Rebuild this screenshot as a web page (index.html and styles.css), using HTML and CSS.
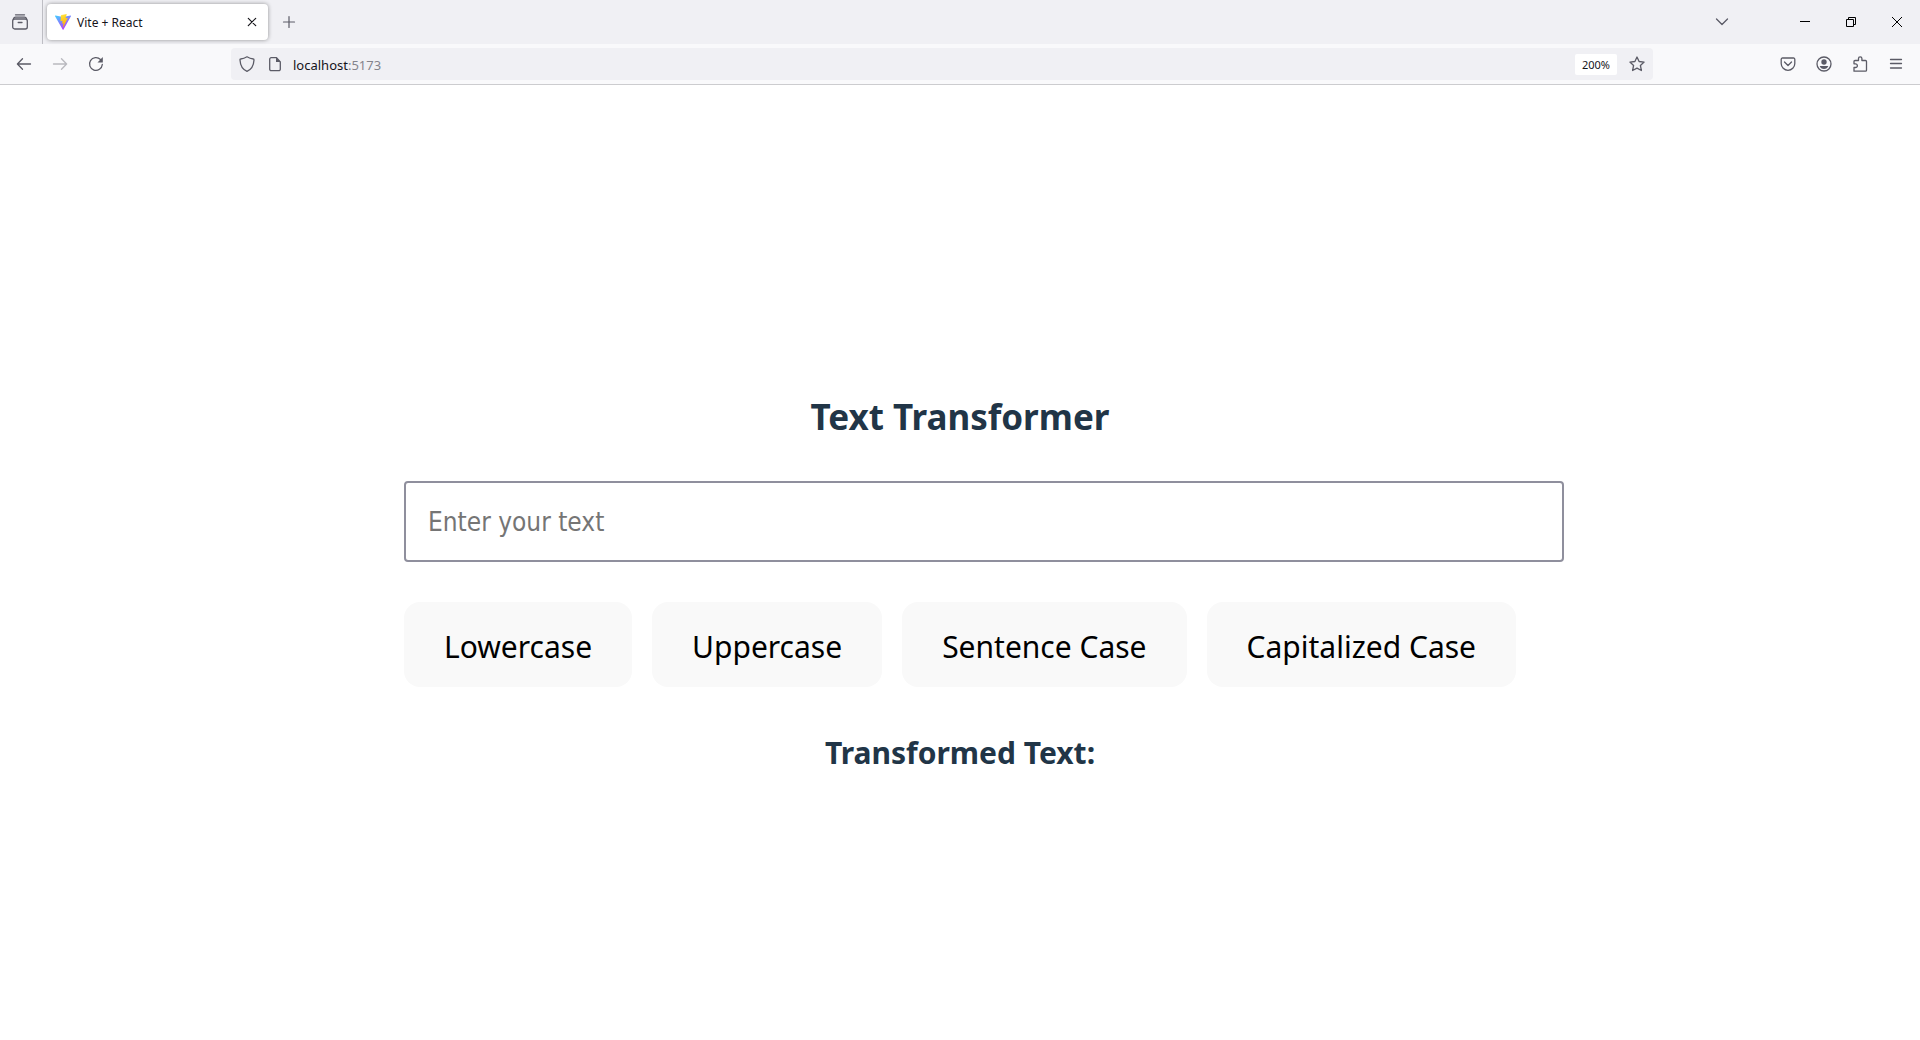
FILE: index.html
```html
<!DOCTYPE html>
<html lang="en">
<head>
  <meta charset="utf-8">
  <meta name="viewport" content="width=device-width, initial-scale=1">
  <title>Vite + React</title>
  <link rel="stylesheet" href="styles.css">
</head>
<body>
  <header class="chrome">
    <div class="tabbar">
      <div class="view">
        <button class="icon-btn" type="button" aria-label="View recent browsing">
          <svg width="16" height="16" viewBox="0 0 16 16"><path d="M3.5 .8h9" /><rect x=".7" y="5" width="14.6" height="10" rx="2"/><path d="M1.5 4.6q.6-1.4 2-1.4h9q1.400 0 2 1.400"/><path d="M6.200 8.500h3.800"/></svg>
        </button>
      </div>
      <div class="tab">
        <svg width="16" height="16" viewBox="0 0 32 32" class="logo">
          <defs>
            <linearGradient id="shield" x1="0" y1="0" x2=".6" y2="1"><stop offset="0" stop-color="#41d1ff"/><stop offset="1" stop-color="#bd34fe"/></linearGradient>
            <linearGradient id="bolt" x1=".4" y1="0" x2=".6" y2="1"><stop offset="0" stop-color="#ffea83"/><stop offset=".1" stop-color="#ffdd35"/><stop offset="1" stop-color="#ffa800"/></linearGradient>
          </defs>
          <path fill="url(#shield)" d="M31.900 4.700 17 31.200a1 1 0 0 1-1.700 0L.1 4.700a1 1 0 0 1 1-1.500L16 5.900 30.900 3.200a1 1 0 0 1 1 1.500z"/>
          <path fill="url(#bolt)" d="M23.200 0 12.200 2.200a.5.5 0 0 0-.4.4l-.7 11.400a.4.4 0 0 0 .5.4l3-.7a.4.4 0 0 1 .5.5l-.9 4.500a.4.4 0 0 0 .5.500l1.900-.6a.4.4 0 0 1 .5.500l-1.400 7c-.1.400.5.700.7.300l9-18a.4.4 0 0 0-.5-.6l-3.200.6a.4.4 0 0 1-.4-.5l2.100-7.300a.4.4 0 0 0-.2-.6z"/>
        </svg>
        <span class="tab-title">Vite + React</span>
        <button class="icon-btn dark" type="button" aria-label="Close tab">
          <svg width="16" height="16" viewBox="0 0 16 16"><path d="m4.300 4.300 7.400 7.400M11.700 4.300l-7.400 7.400"/></svg>
        </button>
      </div>
      <button class="icon-btn new-tab" type="button" aria-label="New tab">
        <svg width="16" height="16" viewBox="0 0 16 16"><path d="M8 2.500v11M2.500 8h11"/></svg>
      </button>
      <button class="icon-btn list-tabs" type="button" aria-label="List all tabs">
        <svg width="16" height="16" viewBox="0 0 16 16"><path d="m2.500 5 5.500 5.500L13.500 5"/></svg>
      </button>
      <div class="window-controls">
        <button class="icon-btn black" type="button" aria-label="Minimize"><svg width="12" height="12" viewBox="0 0 12 12"><path d="M1 5.500h10"/></svg></button>
        <button class="icon-btn black" type="button" aria-label="Restore"><svg width="12" height="12" viewBox="0 0 12 12"><path d="M1.500 3.500h7v7h-7zM3.500 3.500v-2h7v7h-2"/></svg></button>
        <button class="icon-btn black" type="button" aria-label="Close"><svg width="12" height="12" viewBox="0 0 12 12"><path d="m1 1 10 10M11 1 1 11"/></svg></button>
      </div>
    </div>
    <div class="toolbar">
      <nav class="nav">
        <button class="icon-btn" type="button" aria-label="Back"><svg width="16" height="16" viewBox="0 0 16 16"><path d="M14.500 8H1.500M6.500 2.700 1.400 8l5.100 5.300"/></svg></button>
        <button class="icon-btn faded" type="button" aria-label="Forward" disabled><svg width="16" height="16" viewBox="0 0 16 16"><path d="M1.500 8h13M9.500 2.700 14.600 8l-5.100 5.300"/></svg></button>
        <button class="icon-btn" type="button" aria-label="Reload"><svg width="16" height="16" viewBox="0 0 16 16"><path d="M14.300 8.500A6.400 6.400 0 1 1 12.500 3.500l1 1"/><path class="solid" d="M14.800 1v5.400H9.500z"/></svg></button>
      </nav>
      <div class="urlbar">
        <div class="location">
          <div class="identity">
            <svg width="16" height="16" viewBox="0 0 16 16"><path d="M8 .8C6 2 4 2.700 1.600 3 1 3 1 3.400 1 4c.3 5 2 9.300 7 11.300 5-2 6.700-6.300 7-11.300 0-.6 0-1-.6-1C12 2.700 10 2 8 .8z"/></svg>
            <svg width="16" height="16" viewBox="0 0 16 16"><path d="M9.500 1.700H4.200a1.500 1.500 0 0 0-1.500 1.500v10a1.500 1.500 0 0 0 1.500 1.500h7.600a1.500 1.500 0 0 0 1.500-1.500V6z"/><path class="solid" d="M9 1.500V6h4.500z"/></svg>
          </div>
          <p class="address">localhost<span class="port">:5173</span></p>
        </div>
        <button class="zoom" type="button">200%</button>
        <button class="icon-btn" type="button" aria-label="Bookmark this page"><svg width="16" height="16" viewBox="0 0 16 16"><path d="m8 1 2.100 4.500 5 .6-3.700 3.400 1 5L8 12.200l-4.400 2.300 1-5L.9 6.100l5-.6z"/></svg></button>
      </div>
      <div class="tools">
        <button class="icon-btn" type="button" aria-label="Save to Pocket"><svg width="16" height="16" viewBox="0 0 16 16"><path d="M2.500 2h11a1.300 1.300 0 0 1 1.300 1.300V7.500a6.800 6.800 0 0 1-13.600 0V3.300A1.300 1.300 0 0 1 2.500 2zM4.500 6 8 9.500 11.500 6"/></svg></button>
        <button class="icon-btn" type="button" aria-label="Account"><svg width="16" height="16" viewBox="0 0 16 16"><circle cx="8" cy="8" r="7"/><circle class="solid" cx="8" cy="6" r="2.700"/><path class="solid" d="M3.700 10h8.600q-1 3-4.300 3T3.700 10z"/></svg></button>
        <button class="icon-btn" type="button" aria-label="Extensions"><svg width="16" height="16" viewBox="0 0 16 16"><path d="M2 15.200V11.500h1.500a1.800 1.800 0 0 0 0-3.700H2V5.500a1 1 0 0 1 1-1H6.500V2.600a1.700 1.700 0 0 1 3.400 0v1.900H13.500a1 1 0 0 1 1 1v8.700a1 1 0 0 1-1 1z"/></svg></button>
        <button class="icon-btn" type="button" aria-label="Open application menu"><svg width="16" height="16" viewBox="0 0 16 16"><path d="M2.500 3.500h11M2.500 7.500h11M2.500 12h11"/></svg></button>
      </div>
    </div>
  </header>

  <main class="page">
    <section class="transformer">
      <h2 class="title">Text Transformer</h2>
      <input class="text-input" type="text" placeholder="Enter your text" aria-label="Enter your text">
      <div class="actions">
        <button class="action" type="button">Lowercase</button>
        <button class="action" type="button">Uppercase</button>
        <button class="action" type="button">Sentence Case</button>
        <button class="action" type="button">Capitalized Case</button>
      </div>
      <h3 class="result">Transformed Text:</h3>
    </section>
  </main>
</body>
</html>
```
FILE: styles.css
```css
* {
  box-sizing: border-box;
}

body {
  margin: 0;
  min-height: 100vh;
  display: flex;
  flex-direction: column;
  background: #fff;
  color: #213547;
  font-family: "Noto Sans", "Open Sans", sans-serif;
}

button {
  font-family: inherit;
  border: 0;
  cursor: pointer;
}

svg {
  display: block;
  flex: none;
  fill: none;
  stroke: currentColor;
  stroke-width: 1.3;
  stroke-linejoin: round;
  stroke-linecap: round;
}

.solid {
  fill: currentColor;
  stroke: none;
}

.logo {
  stroke: none;
}

/* Browser frame */
.chrome {
  color: #5b5b66;
  border-bottom: 1px solid #cccccf;
}

.icon-btn {
  display: grid;
  place-items: center;
  padding: 0;
  background: none;
  color: inherit;
}

.tabbar {
  display: flex;
  align-items: center;
  height: 44px;
  background: #f0f0f4;
}

.view {
  display: flex;
  align-items: center;
  align-self: stretch;
  width: 43px;
  padding-left: 12px;
  border-right: 1px solid #bebec4;
}

.tab {
  display: flex;
  align-items: center;
  gap: 6px;
  width: 221px;
  height: 36px;
  margin-left: 4px;
  padding: 0 8px;
  border-radius: 4px;
  background: #fff;
  box-shadow: 0 0 4px rgba(0, 0, 0, .4);
}

.tab-title {
  flex: 1;
  padding-top: 2px;
  color: #15141a;
  font-size: 12px;
  line-height: 16px;
}

.dark {
  color: #15141a;
}

.dark svg,
.new-tab svg,
.black svg {
  stroke-width: 1.2;
}

.new-tab {
  margin-left: 13px;
}

.list-tabs {
  margin-left: auto;
}

.window-controls {
  display: flex;
  margin-left: 52px;
}

.window-controls .icon-btn {
  width: 46px;
  height: 44px;
}

.black {
  color: #000;
}

.black svg {
  stroke-width: 1;
  stroke-linecap: butt;
  stroke-linejoin: miter;
}

.toolbar {
  display: flex;
  align-items: center;
  height: 40px;
  padding: 0 16px;
  background: #f9f9fb;
}

.nav,
.tools {
  display: flex;
  gap: 20px;
}

.faded {
  opacity: .4;
}

.urlbar {
  display: flex;
  align-items: center;
  gap: 12px;
  flex: 1;
  height: 32px;
  margin: 0 127px;
  padding: 0 8px;
  border-radius: 4px;
  background: #f0f0f4;
}

.location {
  display: flex;
  align-items: center;
  gap: 10px;
  flex: 1;
}

.identity {
  display: flex;
  gap: 12px;
}

.address {
  margin: 0;
  padding-top: 2px;
  color: #15141a;
  font-size: 13px;
  line-height: 20px;
}

.port {
  color: #84848c;
}

.zoom {
  padding: 0 7px;
  border-radius: 2px;
  background: #fff;
  color: #15141a;
  font-size: 11px;
  line-height: 21px;
}

/* Page */
.page {
  flex: 1;
  display: flex;
  align-items: center;
  justify-content: center;
  padding: 45px 64px 0;
}

.transformer {
  text-align: center;
}

.title {
  margin: 0 0 44px;
  font-size: 35px;
  line-height: 40px;
}

.text-input {
  display: block;
  box-sizing: content-box;
  width: 100%;
  height: 33px;
  padding: 22px;
  border: 2px solid #8f8f9d;
  border-radius: 4px;
  background: #fff;
  color: #213547;
  font-family: "DejaVu Sans Condensed", "DejaVu Sans", sans-serif;
  font-size: 26px;
}

.text-input::placeholder {
  color: #757575;
}

.actions {
  display: flex;
  flex-wrap: wrap;
  gap: 20px;
  margin: 40px 0 46px;
}

.action {
  padding: 22px 40px 18px;
  border-radius: 16px;
  background: #f9f9f9;
  color: #000;
  font-size: 30px;
  line-height: 45px;
}

.result {
  margin: 0;
  font-size: 30px;
  line-height: 40px;
}
```
